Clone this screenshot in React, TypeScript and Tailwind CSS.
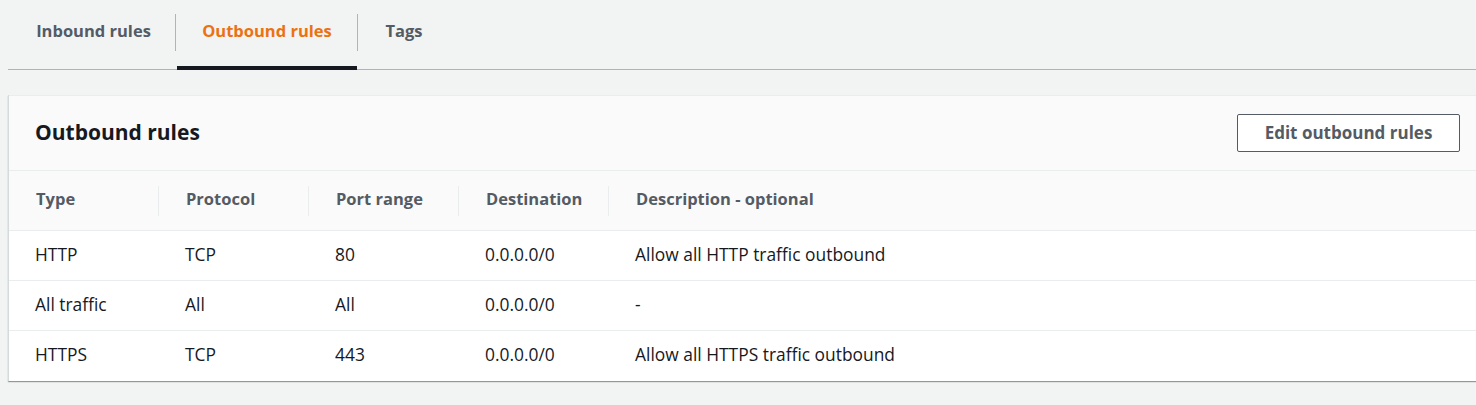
import React from "react";

const rows = [
  ["HTTP", "TCP", "80", "0.0.0.0/0", "Allow all HTTP traffic outbound"],
  ["All traffic", "All", "All", "0.0.0.0/0", "-"],
  ["HTTPS", "TCP", "443", "0.0.0.0/0", "Allow all HTTPS traffic outbound"],
];

const headers = ["Type", "Protocol", "Port range", "Destination", "Description - optional"];

export default function App() {
  return (
    <div
      className="w-[1476px] h-[405px] bg-[#f2f3f3] overflow-hidden"
      style={{ fontFamily: '"Open Sans", "Noto Sans", Arial, sans-serif' }}
    >
      <div className="pl-[8px]">
        <div className="flex h-[70px] border-b border-[#aab7b8] pt-[14px]">
          <div className="flex h-[55px] items-start">
            <div className="w-[168px] h-[37px] flex items-center justify-center text-[16.5px] font-bold text-[#545b64] border-r border-[#aab7b8] leading-none pb-[2px] pl-[4px]">
              Inbound rules
            </div>
            <div className="relative w-[182px] h-[37px] flex items-center justify-center text-[16.5px] font-bold text-[#ec7211] border-r border-[#aab7b8] leading-none pb-[2px] pl-[1px]">
              Outbound rules
              <div className="absolute left-[1px] right-[0px] top-[52px] h-[4px] bg-[#16191f]" />
            </div>
            <div className="w-[92px] h-[37px] flex items-center justify-center text-[16.5px] font-bold text-[#545b64] leading-none pb-[2px]">
              Tags
            </div>
          </div>
        </div>
        <div className="mt-[25px] bg-white border-l border-[#d5dbdb] shadow-[0_1px_1px_0_rgba(0,28,36,0.3),1px_1px_1px_0_rgba(0,28,36,0.15)]">
          <div className="h-[76px] bg-[#fafafa] border-t border-[#eaeded] border-b border-[#eaeded] flex items-center justify-between pl-[26px] pr-[16px]">
            <div className="text-[21px] font-bold text-[#16191f] leading-none pb-[2px]">Outbound rules</div>
            <button className="w-[223px] h-[38px] border border-[#545b64] rounded-[2px] bg-white text-[17px] font-bold text-[#545b64] leading-none pb-[2px]">
              Edit outbound rules
            </button>
          </div>
          <div className="flex h-[60px] bg-[#fafafa] border-b border-[#eaeded] items-center">
            {headers.map((h, i) => (
              <div
                key={h}
                className={`w-[150px] shrink-0 h-[30px] flex items-center pl-[27px] text-[16.5px] font-bold text-[#545b64] leading-none pb-[2px] ${
                  i < 4 ? "border-r border-[#eaeded]" : ""
                }`}
              >
                <span className="whitespace-nowrap">{h}</span>
              </div>
            ))}
          </div>
          {rows.map((r, ri) => (
            <div
              key={ri}
              className={`flex h-[50px] items-center ${ri < 2 ? "border-b border-[#eaeded]" : ""}`}
            >
              {r.map((c, ci) => (
                <div key={ci} className="w-[150px] shrink-0 pl-[26px] text-[17.4px] text-[#16191f] whitespace-nowrap leading-none pb-[2px]">
                  {c}
                </div>
              ))}
            </div>
          ))}
        </div>
      </div>
    </div>
  );
}
